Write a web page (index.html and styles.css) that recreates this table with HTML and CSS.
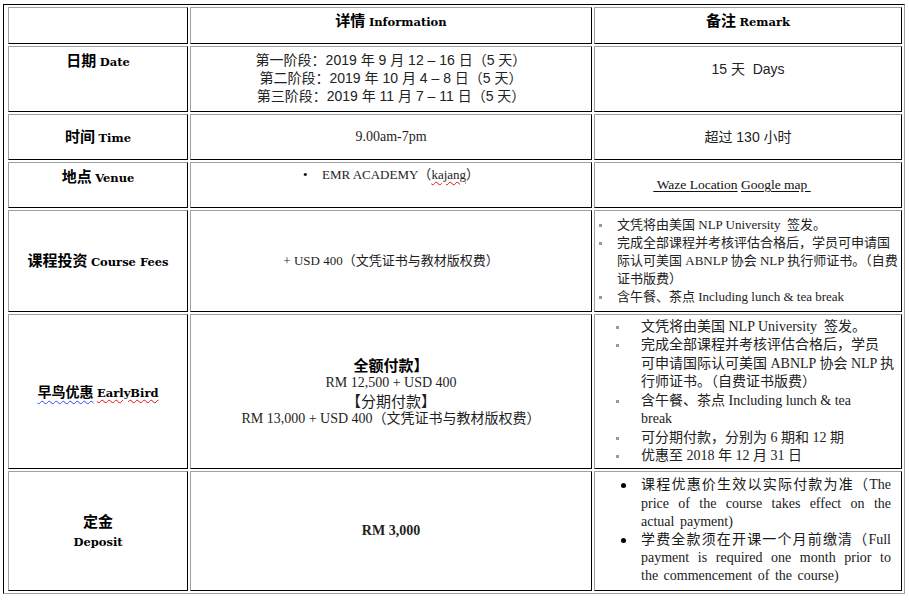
FILE: index.html
```html
<!DOCTYPE html>
<html lang="zh-CN">
<head>
<meta charset="utf-8">
<title>课程信息</title>
<link rel="stylesheet" href="styles.css">
</head>
<body>
<table class="sheet">
  <tr class="row-head">
    <td class="c1"></td>
    <td class="c2 label top pad-3"><b class="zh-b">详情</b> <span class="mono">Information</span></td>
    <td class="c3 label top pad-3"><b class="zh-b">备注</b> <span class="mono">Remark</span></td>
  </tr>
  <tr class="row-date">
    <td class="c1 label top pad-4"><b class="zh-b">日期</b> <span class="mono">Date</span></td>
    <td class="c2 top pad-4 sans">
      <div>第一阶段：2019 年 9 月 12 – 16 日（5 天）</div>
      <div>第二阶段：2019 年 10 月 4 – 8 日（5 天）</div>
      <div>第三阶段：2019 年 11 月 7 – 11 日（5 天）</div>
    </td>
    <td class="c3 top pad-13 sans">15 天 &nbsp;Days</td>
  </tr>
  <tr class="row-time">
    <td class="c1 label"><b class="zh-b">时间</b> <span class="mono">Time</span></td>
    <td class="c2 serif-14">9.00am-7pm</td>
    <td class="c3 sans">超过 130 小时</td>
  </tr>
  <tr class="row-venue">
    <td class="c1 label top pad-4"><b class="zh-b">地点</b> <span class="mono">Venue</span></td>
    <td class="c2 top pad-3">
      <ul class="venue"><li>EMR ACADEMY（<span class="spell">kajang</span>）</li></ul>
    </td>
    <td class="c3 serif-13 links"><a class="link" href="#">&nbsp;Waze Location</a> <a class="link" href="#">Google map&nbsp;</a></td>
  </tr>
  <tr class="row-fees">
    <td class="c1 label"><b class="zh-b">课程投资</b> <span class="mono">Course Fees</span></td>
    <td class="c2 serif-13">+ USD 400（文凭证书与教材版权费）</td>
    <td class="c3 list-cell">
      <ul class="notes notes-fees">
        <li>文凭将由美国 NLP University &nbsp;签发。</li>
        <li>完成全部课程并考核评估合格后，学员可申请国<br>际认可美国 ABNLP 协会 NLP 执行师证书。（自费<br>证书版费）</li>
        <li>含午餐、茶点 Including lunch &amp; tea break</li>
      </ul>
    </td>
  </tr>
  <tr class="row-early">
    <td class="c1 label"><span class="zh-m grammar">早鸟优惠</span> <span class="mono spell">EarlyBird</span></td>
    <td class="c2 serif-14 early">
      <div class="zh-b big">全额付款】</div>
      <div>RM 12,500 + USD 400</div>
      <div class="big">【分期付款】</div>
      <div>RM 13,000 + USD 400（文凭证书与教材版权费）</div>
    </td>
    <td class="c3 list-cell">
      <ul class="notes notes-early">
        <li>文凭将由美国 NLP University &nbsp;签发。</li>
        <li>完成全部课程并考核评估合格后，学员<br>可申请国际认可美国 ABNLP 协会 NLP 执<br>行师证书。（自费证书版费）</li>
        <li>含午餐、茶点 Including lunch &amp; tea<br>break</li>
        <li>可分期付款，分别为 6 期和 12 期</li>
        <li>优惠至 2018 年 12 月 31 日</li>
      </ul>
    </td>
  </tr>
  <tr class="row-deposit">
    <td class="c1 label deposit"><b class="zh-b">定金</b><br><span class="mono">Deposit</span></td>
    <td class="c2 serif-14"><b>RM 3,000</b></td>
    <td class="c3 list-cell">
      <ul class="notes notes-deposit">
        <li>课程优惠价生效以实际付款为准（The price of the course takes effect on the actual payment)</li>
        <li>学费全款须在开课一个月前缴清（Full payment is required one month prior to the commencement of the course)</li>
      </ul>
    </td>
  </tr>
</table>
</body>
</html>
```

FILE: styles.css
```css
* { box-sizing: border-box; }

html, body {
  margin: 0;
  background: #ffffff;
}

body {
  padding: 4px 0 0 3px;
  font-family: "Liberation Serif", "Noto Sans CJK SC", serif;
  font-size: 14px;
  line-height: 18px;
  color: #1e1e1e;
}

.sheet {
  border-collapse: separate;
  border-spacing: 2px;
  table-layout: fixed;
  width: 902px;
  border: 1px solid;
  border-color: #000 #a0a0a0 #a0a0a0 #000;
  padding-left: 2px;
}

.sheet td {
  border: 1px solid;
  border-color: #a0a0a0 #000 #000 #a0a0a0;
  padding: 0 6px;
  text-align: center;
  vertical-align: middle;
}

.c1 { width: 180px; }
.c2 { width: 402px; }
.c3 { width: 308px; }

.row-head { height: 37px; }
.row-date { height: 66px; }
.row-time { height: 46px; }
.row-venue { height: 46px; }
.row-fees { height: 102px; }
.row-early { height: 155px; }
.row-deposit { height: 120px; }

.sheet td.top { vertical-align: top; }
.sheet td.pad-3 { padding-top: 3px; }
.sheet td.pad-4 { padding-top: 4px; }
.sheet td.pad-13 { padding-top: 13px; }

.label { color: #000; }

.zh-b {
  font-family: "Noto Sans CJK SC", sans-serif;
  font-weight: 700;
  font-size: 15px;
}

.zh-m {
  font-family: "Noto Sans CJK SC", sans-serif;
  font-weight: 700;
  font-size: 14px;
}

.mono {
  font-family: "DejaVu Serif", "Liberation Serif", serif;
  font-weight: 700;
  font-size: 11.5px;
}

.sans {
  font-family: "Liberation Sans", "Noto Sans CJK SC", sans-serif;
  font-size: 14px;
  color: #222;
}

.serif-14 {
  font-family: "Liberation Serif", "Noto Sans CJK SC", serif;
  font-size: 14px;
}

.serif-13 {
  font-family: "Liberation Serif", "Noto Sans CJK SC", serif;
  font-size: 13px;
}

.spell {
  text-decoration: underline wavy #e01010;
  text-decoration-thickness: 1px;
  text-underline-offset: 2px;
}

.grammar {
  text-decoration: underline wavy #2a4bff;
  text-decoration-thickness: 1px;
  text-underline-offset: 3px;
}

.venue {
  margin: 0;
  padding: 0;
  list-style: none;
  font-size: 13px;
}

.venue li {
  display: inline-block;
}

.venue li::before {
  content: "•";
  display: inline-block;
  width: 19px;
  text-align: left;
  color: #000;
}

.sheet td.links {
  padding-right: 38px;
  font-size: 13.5px;
}

.link {
  color: #111;
  text-decoration: underline;
  text-underline-offset: 2px;
}

.early .big {
  font-family: "Noto Sans CJK SC", sans-serif;
  font-size: 15px;
}

.early .zh-b { font-weight: 700; color: #000; }

.deposit { line-height: 19px; }

.sheet td.list-cell {
  padding: 0;
  text-align: left;
}

.notes {
  margin: 0;
  list-style: none;
}

.notes li {
  position: relative;
}

.notes li::before {
  content: "";
  position: absolute;
  width: 3px;
  height: 3px;
  background: #9a9a9a;
}

.notes-fees {
  padding: 0 0 0 22px;
  font-size: 13px;
  line-height: 18px;
  white-space: nowrap;
  color: #222;
}

.notes-fees li::before {
  left: -18px;
  top: 8px;
}

.notes-early {
  padding: 0 0 0 46px;
  font-size: 14px;
  line-height: 18.5px;
  white-space: nowrap;
  color: #222;
}

.notes-early li::before {
  left: -25px;
  top: 8px;
}

.notes-deposit {
  padding: 0 10px 0 46px;
  font-size: 14px;
  line-height: 18.2px;
  word-spacing: 2px;
  text-align: justify;
  color: #1a1a1a;
}

.notes-deposit li::before {
  left: -20px;
  top: 7px;
  width: 5px;
  height: 5px;
  border-radius: 50%;
  background: #000;
}
```
